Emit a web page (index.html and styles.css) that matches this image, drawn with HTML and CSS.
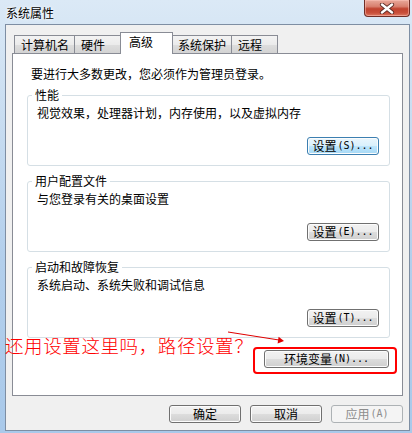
FILE: index.html
```html
<!DOCTYPE html>
<html lang="zh-CN">
<head>
<meta charset="utf-8">
<title>系统属性</title>
<link rel="stylesheet" href="styles.css">
</head>
<body>
<div class="window">
  <div class="titlebar">
    <span class="title">系统属性</span>
    <div class="close">
      <svg width="16" height="11" viewBox="0 0 16 11">
        <path d="M3 1.5 L13 9.5 M13 1.5 L3 9.5" stroke="#5a2a24" stroke-width="4.2" stroke-linecap="round" fill="none"/>
        <path d="M3 1.5 L13 9.5 M13 1.5 L3 9.5" stroke="#ffffff" stroke-width="2.4" stroke-linecap="round" fill="none"/>
      </svg>
    </div>
  </div>
  <div class="client">
    <div class="tabs">
      <div class="tab">计算机名</div>
      <div class="tab">硬件</div>
      <div class="tab active">高级</div>
      <div class="tab">系统保护</div>
      <div class="tab">远程</div>
    </div>
    <div class="panel">
      <p class="intro">要进行大多数更改，您必须作为管理员登录。</p>
      <fieldset class="group">
        <legend>性能</legend>
        <p class="desc">视觉效果，处理器计划，内存使用，以及虚拟内存</p>
        <div class="btn-row"><button class="btn hot">设置<span class="key">(S)...</span></button></div>
      </fieldset>
      <fieldset class="group">
        <legend>用户配置文件</legend>
        <p class="desc">与您登录有关的桌面设置</p>
        <div class="btn-row"><button class="btn">设置<span class="key">(E)...</span></button></div>
      </fieldset>
      <fieldset class="group">
        <legend>启动和故障恢复</legend>
        <p class="desc">系统启动、系统失败和调试信息</p>
        <div class="btn-row"><button class="btn">设置<span class="key">(T)...</span></button></div>
      </fieldset>
      <div class="env-row"><button class="btn env">环境变量<span class="key">(N)...</span></button></div>
    </div>
    <div class="footer">
      <button class="btn">确定</button>
      <button class="btn">取消</button>
      <button class="btn" disabled>应用<span class="key">(A)</span></button>
    </div>
  </div>
  <div class="note">还用设置这里吗，路径设置？</div>
  <div class="highlight"></div>
  <svg class="arrow" width="412" height="433" viewBox="0 0 412 433">
    <line x1="228" y1="332" x2="279" y2="340" stroke="#e00000" stroke-width="1"/>
    <polygon points="284,341 277.6,343.5 278.6,336.8" fill="#e00000"/>
  </svg>
</div>
</body>
</html>
```
FILE: styles.css
```css
* { box-sizing: border-box; }
html, body { margin: 0; padding: 0; }
body {
  font-family: "Noto Sans CJK SC", "Noto Sans", sans-serif;
  font-size: 12px;
  line-height: 14px;
  color: #000;
  background: #fff;
}
p { margin: 0; }

.window {
  position: relative;
  width: 412px;
  height: 433px;
  overflow: hidden;
  background: linear-gradient(to bottom, #dbe9f6 0%, #cde0f2 20%, #b3cfec 60%, #a9c9ea 100%);
}

.titlebar {
  height: 24px;
  display: flex;
  align-items: flex-start;
}
.title {
  padding: 6px 0 0 6px;
  line-height: 14px;
  text-shadow: 0 0 4px #ffffff, 0 0 2px #ffffff;
}
.close {
  margin-left: auto;
  margin-right: 2px;
  width: 46px;
  height: 17px;
  border: 1px solid #6f2d26;
  border-top: none;
  border-radius: 0 0 4px 4px;
  background: linear-gradient(to bottom, #e9a99b 0%, #d9806f 40%, #c0432f 55%, #c94f3a 80%, #dd7a62 100%);
  box-shadow: inset 0 0 0 1px rgba(255, 200, 190, 0.5);
  display: flex;
  align-items: center;
  justify-content: center;
}

.client {
  margin: 0 2px 0 5px;
  height: 407px;
  border: 1px solid #7e8ea3;
  background: #f0f0f0;
  padding: 0 6px;
}

.tabs {
  display: flex;
  align-items: flex-start;
  margin: 7px 0 -1px 2px;
  height: 22px;
  position: relative;
  z-index: 1;
}
.tab {
  height: 18px;
  margin-top: 3px;
  min-width: 47px;
  padding: 0 5px 0 6px;
  border: 1px solid #898c95;
  border-bottom: none;
  margin-left: -1px;
  line-height: 17px;
  white-space: nowrap;
  background: linear-gradient(to bottom, #f3f3f3 0%, #ebebeb 50%, #dedede 50%, #d3d3d3 100%);
}
.tab:first-child { margin-left: 0; }
.tab.active {
  height: 22px;
  margin-top: 0;
  min-width: 53px;
  padding-left: 8px;
  margin-left: -1px;
  margin-right: -1px;
  background: #ffffff;
  line-height: 17px;
  position: relative;
  z-index: 2;
}

.panel {
  height: 343px;
  border: 1px solid #898c95;
  background: #ffffff;
  padding: 0 12px 0 14px;
}
.intro {
  margin: 13px 0 0 4px;
}

.group {
  margin: 7px 0 0 0;
  padding: 4px 10px 10px 9px;
  border: 1px solid #d5dfe5;
  border-radius: 3px;
  min-inline-size: 0;
}
.group + .group { margin-top: 8px; }
.group legend {
  margin-left: -5px;
  padding: 0 3px;
  line-height: 14px;
}
.btn-row {
  display: flex;
  justify-content: flex-end;
  margin-top: 17px;
}

.btn {
  width: 72px;
  height: 18px;
  padding: 0;
  border: 1px solid #707070;
  border-radius: 3px;
  background: linear-gradient(to bottom, #f2f2f2 0%, #ebebeb 50%, #dddddd 50%, #cfcfcf 100%);
  box-shadow: inset 0 0 0 1px #fcfcfc;
  font-family: "Noto Sans CJK SC", "Noto Sans", sans-serif;
  font-size: 12px;
  line-height: 14px;
  color: #000;
  display: inline-flex;
  align-items: center;
  justify-content: center;
  white-space: nowrap;
}
.btn.hot {
  border-color: #3c7fb1;
  background: linear-gradient(to bottom, #eaf6fd 0%, #d9f0fc 50%, #bee6fd 50%, #a7d9f5 100%);
}
.btn:disabled {
  border-color: #adb2b5;
  background: #f4f4f4;
  box-shadow: none;
  color: #8d8d8d;
}
.key {
  font-family: "DejaVu Sans Mono", "Liberation Mono", monospace;
  font-size: 10px;
  margin-left: 1px;
}

.env-row {
  display: flex;
  justify-content: flex-end;
  margin-top: 12px;
  padding-right: 1px;
}
.btn.env { width: 125px; }

.footer {
  display: flex;
  justify-content: flex-end;
  gap: 9px;
  margin-top: 9px;
}

.note {
  position: absolute;
  left: 5px;
  top: 335px;
  font-size: 18.5px;
  font-weight: 300;
  letter-spacing: 0.6px;
  line-height: 20px;
  color: #ff0000;
  white-space: nowrap;
}
.highlight {
  position: absolute;
  left: 253px;
  top: 347px;
  width: 144px;
  height: 27px;
  border: 2px solid #ff0000;
  border-radius: 4px;
}
.arrow {
  position: absolute;
  left: 0;
  top: 0;
  pointer-events: none;
}
```
